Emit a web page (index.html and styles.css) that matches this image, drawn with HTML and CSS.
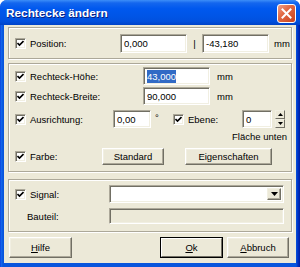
FILE: index.html
```html
<!DOCTYPE html>
<html>
<head>
<meta charset="utf-8">
<link rel="stylesheet" href="styles.css">
</head>
<body>
<div class="win">
  <div class="titlebar">
    <span class="title">Rechtecke ändern</span>
    <span class="close"><svg width="11" height="11" viewBox="0 0 11 11"><path d="M1.5 1.5 L9.5 9.5 M9.5 1.5 L1.5 9.5" stroke="#fff" stroke-width="2" stroke-linecap="square"/></svg></span>
  </div>
  <div class="client">
    <div class="group g1">
      <div class="row r19">
        <span class="cb"><svg width="7" height="7" viewBox="0 0 7 7"><path d="M0.5 3 L2.5 5 L6.5 1" fill="none" stroke="#000" stroke-width="1.6"/></svg></span>
        <span class="lbl w90">Position:</span>
        <span class="edit w67">0,000</span>
        <span class="sep">|</span>
        <span class="edit w67">-43,180</span>
        <span class="unit u5">mm</span>
      </div>
    </div>

    <div class="group g2">
      <div class="row r18 mt3">
        <span class="cb"><svg width="7" height="7" viewBox="0 0 7 7"><path d="M0.5 3 L2.5 5 L6.5 1" fill="none" stroke="#000" stroke-width="1.6"/></svg></span>
        <span class="lbl w113">Rechteck-Höhe:</span>
        <span class="edit w67"><span class="sel">43,000</span></span>
        <span class="unit u7">mm</span>
      </div>
      <div class="row r18 mt2">
        <span class="cb"><svg width="7" height="7" viewBox="0 0 7 7"><path d="M0.5 3 L2.5 5 L6.5 1" fill="none" stroke="#000" stroke-width="1.6"/></svg></span>
        <span class="lbl w113">Rechteck-Breite:</span>
        <span class="edit w67">90,000</span>
        <span class="unit u7">mm</span>
      </div>
      <div class="row r18 mt5">
        <span class="cb"><svg width="7" height="7" viewBox="0 0 7 7"><path d="M0.5 3 L2.5 5 L6.5 1" fill="none" stroke="#000" stroke-width="1.6"/></svg></span>
        <span class="lbl w83">Ausrichtung:</span>
        <span class="edit w38">0,00</span>
        <span class="deg">°</span>
        <span class="cb"><svg width="7" height="7" viewBox="0 0 7 7"><path d="M0.5 3 L2.5 5 L6.5 1" fill="none" stroke="#000" stroke-width="1.6"/></svg></span>
        <span class="lbl w54">Ebene:</span>
        <span class="edit w30">0</span>
        <span class="spin">
          <span class="sbtn"><svg width="5" height="3" viewBox="0 0 5 3"><path d="M2.5 0 L5 3 L0 3 Z" fill="#000"/></svg></span>
          <span class="sbtn"><svg width="5" height="3" viewBox="0 0 5 3"><path d="M0 0 L5 0 L2.5 3 Z" fill="#000"/></svg></span>
        </span>
      </div>
      <div class="row r12 mt2 right">
        <span>Fläche unten</span>
      </div>
      <div class="row r17 mt6">
        <span class="cb"><svg width="7" height="7" viewBox="0 0 7 7"><path d="M0.5 3 L2.5 5 L6.5 1" fill="none" stroke="#000" stroke-width="1.6"/></svg></span>
        <span class="lbl w72">Farbe:</span>
        <span class="btn w62">Standard</span>
        <span class="btn w87 ml21">Eigenschaften</span>
      </div>
    </div>

    <div class="group g3">
      <div class="row r18 mt5">
        <span class="cb"><svg width="7" height="7" viewBox="0 0 7 7"><path d="M0.5 3 L2.5 5 L6.5 1" fill="none" stroke="#000" stroke-width="1.6"/></svg></span>
        <span class="lbl w79">Signal:</span>
        <span class="combo">
          <span class="cbtn"><svg width="7" height="4" viewBox="0 0 7 4"><path d="M0 0 L7 0 L3.5 4 Z" fill="#000"/></svg></span>
        </span>
      </div>
      <div class="row r16 mt5">
        <span class="lbl bauteil">Bauteil:</span>
        <span class="edit dis"></span>
      </div>
    </div>

    <div class="buttons">
      <span class="btn big hilfe"><u>H</u>ilfe</span>
      <span class="spacer"></span>
      <span class="btn big def"><span><u>O</u>k</span></span>
      <span class="btn big abbr"><u>A</u>bbruch</span>
    </div>
  </div>
</div>
</body>
</html>
```

FILE: styles.css
```css
* { box-sizing: border-box; }
html, body { margin: 0; padding: 0; }
body {
  width: 300px;
  height: 267px;
  overflow: hidden;
  background: #fff;
  font-family: "Liberation Sans", Arial, sans-serif;
  font-size: 9.5px;
  color: #000;
}
.win {
  width: 300px;
  height: 267px;
  background: linear-gradient(90deg, #0831D9 0, #166AEE 1px, #0855DD 3px, #0855DD 296px, #0031C4 298px, #001EA0 300px);
  border-radius: 7px 7px 0 0;
  display: flex;
  flex-direction: column;
  overflow: hidden;
}
.titlebar {
  height: 25px;
  flex: none;
  background: linear-gradient(180deg, #3C8EF8 0%, #1466EE 12%, #0058EE 35%, #0055E6 65%, #0150DE 85%, #0043C8 100%);
  display: flex;
  align-items: center;
  padding: 0 4px 0 6px;
}
.title {
  flex: 1;
  color: #fff;
  font-weight: bold;
  font-size: 11.8px;
  text-shadow: 1px 1px #0A1E80;
  margin-top: 1px;
}
.close {
  width: 19px;
  height: 19px;
  align-self: flex-start;
  margin-top: 4px;
  border: 1px solid #fff;
  border-radius: 3px;
  background: linear-gradient(135deg, #F0A088 0%, #E26A45 40%, #C9421E 100%);
  display: flex;
  align-items: center;
  justify-content: center;
}
.client {
  flex: 1;
  margin: 0 4px 4px;
  background: #ECE9D8;
  padding: 2px 4px 0 4px;
  display: flex;
  flex-direction: column;
}
.group {
  border: 1px solid #ACA899;
  box-shadow: inset 1px 1px #fff, 1px 1px #fff;
  padding-left: 6px;
  padding-right: 4px;
  display: flex;
  flex-direction: column;
  flex: none;
}
.g1 { height: 32px; padding-top: 6px; }
.g2 { height: 109px; margin-top: 4px; }
.g3 { height: 53px; margin-top: 7px; }
.row { display: flex; align-items: center; flex: none; }
.r19 { height: 19px; }
.r18 { height: 18px; }
.r17 { height: 17px; }
.r16 { height: 16px; }
.r12 { height: 12px; }
.mt2 { margin-top: 2px; }
.mt3 { margin-top: 3px; }
.mt5 { margin-top: 5px; }
.mt6 { margin-top: 6px; }
.right { justify-content: flex-end; }
.cb {
  width: 11px;
  height: 11px;
  flex: none;
  background: #fff;
  border: 1px solid;
  border-color: #ACA899 #fff #fff #ACA899;
  box-shadow: inset 1px 1px #716F64, inset -1px -1px #F1EFE2;
  display: flex;
  align-items: center;
  justify-content: center;
}
.lbl { margin-left: 4px; flex: none; white-space: nowrap; }
.w90 { width: 90px; }
.w113 { width: 113px; }
.w83 { width: 83px; }
.w54 { width: 54px; }
.w72 { width: 72px; }
.w79 { width: 79px; }
.bauteil { margin-left: 12px; width: 82px; }
.edit {
  height: 100%;
  background: #fff;
  border: 1px solid;
  border-color: #ACA899 #fff #fff #ACA899;
  box-shadow: inset 1px 1px #716F64, inset -1px -1px #F1EFE2;
  padding-left: 3px;
  display: flex;
  align-items: center;
  flex: none;
  white-space: nowrap;
}
.w67 { width: 67px; }
.w38 { width: 38px; }
.w30 { width: 30px; }
.dis { width: 175px; background: #ECE9D8; }
.sel { background: #316AC5; color: #fff; padding: 1px 0; }
.sep { width: 15px; text-align: center; flex: none; }
.unit { flex: none; }
.u5 { margin-left: 5px; }
.u7 { margin-left: 7px; }
.deg { width: 22px; padding-left: 4px; flex: none; align-self: flex-start; margin-top: 2px; }
.spin {
  margin-left: 3px;
  width: 10px;
  height: 18px;
  display: flex;
  flex-direction: column;
  flex: none;
}
.sbtn {
  height: 9px;
  background: #ECE9D8;
  border: 1px solid;
  border-color: #F1EFE2 #716F64 #716F64 #F1EFE2;
  display: flex;
  align-items: center;
  justify-content: center;
}
.btn {
  height: 100%;
  background: #ECE9D8;
  border: 1px solid;
  border-color: #fff #716F64 #716F64 #fff;
  box-shadow: inset -1px -1px #ACA899, inset 1px 1px #F1EFE2;
  display: flex;
  align-items: center;
  justify-content: center;
  flex: none;
  white-space: nowrap;
}
.w62 { width: 62px; }
.w87 { width: 87px; }
.ml21 { margin-left: 21px; }
.combo {
  width: 175px;
  height: 100%;
  background: #fff;
  border: 1px solid;
  border-color: #ACA899 #fff #fff #ACA899;
  box-shadow: inset 1px 1px #716F64, inset -1px -1px #F1EFE2;
  display: flex;
  justify-content: flex-end;
  align-items: stretch;
  padding: 2px;
  flex: none;
}
.cbtn {
  width: 14px;
  background: #ECE9D8;
  border: 1px solid;
  border-color: #F1EFE2 #716F64 #716F64 #F1EFE2;
  box-shadow: inset -1px -1px #ACA899;
  display: flex;
  align-items: center;
  justify-content: center;
}
.buttons {
  display: flex;
  height: 21px;
  margin-top: 5px;
  flex: none;
}
.big { height: 21px; }
.hilfe { width: 63px; margin-left: 1px; }
.spacer { flex: 1; }
.def {
  width: 63px;
  border: 1px solid #000;
  box-shadow: none;
  padding: 0;
  align-items: stretch;
}
.def > span {
  flex: 1;
  display: flex;
  align-items: center;
  justify-content: center;
  border: 1px solid;
  border-color: #fff #716F64 #716F64 #fff;
}
.abbr { width: 62px; margin-left: 4px; margin-right: 3px; }
```
